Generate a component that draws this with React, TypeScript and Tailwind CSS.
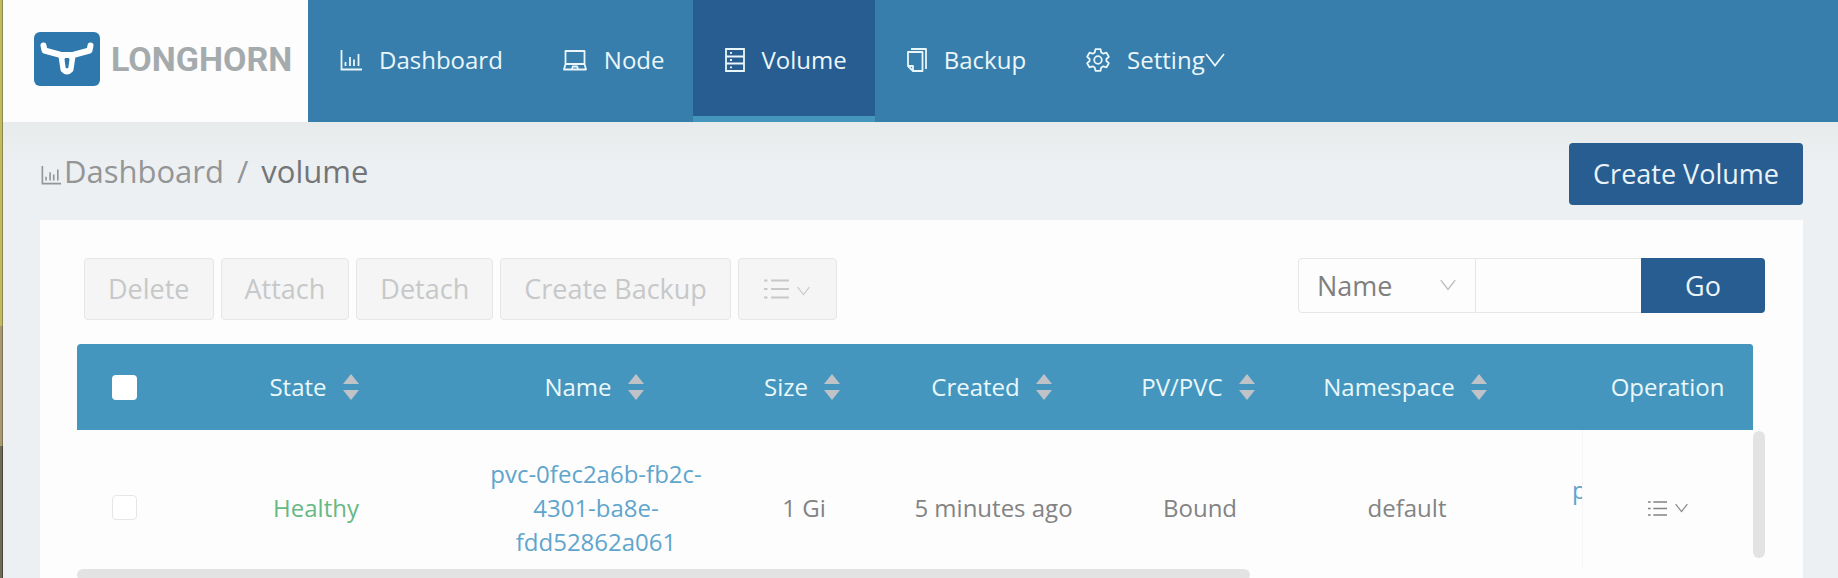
import React from "react";

type IconProps = { className?: string };

const ChartIcon = ({ className }: IconProps) => (
  <svg className={className} viewBox="0 0 22 22" fill="none" stroke="currentColor" strokeWidth="1.8" aria-hidden="true">
    <path d="M1.5 1v19.500H22M5.500 13v4M10 8v9M14 10.500v6.500M18.500 5v12" />
  </svg>
);

const LaptopIcon = ({ className }: IconProps) => (
  <svg className={className} viewBox="0 0 24 22" fill="none" stroke="currentColor" strokeWidth="1.8" strokeLinejoin="round" aria-hidden="true">
    <path d="M2.500 15V2h19v13M2.500 15h19L23 20.500H1z" />
    <path d="M9 20l.8-2.500h4.400l.8 2.500" />
  </svg>
);

const ServerIcon = ({ className }: IconProps) => (
  <svg className={className} viewBox="0 0 20 24" fill="none" stroke="currentColor" strokeWidth="1.8" aria-hidden="true">
    <path d="M1 1h18v22H1zM1 8.500h18M1 15.500h18M5 4.800h2M5 12h2M5 19.300h2" />
  </svg>
);

const CopyIcon = ({ className }: IconProps) => (
  <svg className={className} viewBox="0 0 20 24" fill="none" stroke="currentColor" strokeWidth="1.8" strokeLinejoin="round" aria-hidden="true">
    <path d="M4 1h15v20M1 4h14.500v19H6l-5-5z" />
    <path d="M1 18h5v5" />
  </svg>
);

const GearIcon = ({ className }: IconProps) => (
  <svg className={className} viewBox="0 0 24 24" fill="none" stroke="currentColor" strokeWidth="1.8" strokeLinejoin="round" aria-hidden="true">
    <path d="M9.500 1.200h5l.8 3.300 2 1.200 3.200-1 2.300 4.100-2.400 2.200v2l2.400 2.200-2.300 4.100-3.200-1-2 1.200-.8 3.300h-5l-.8-3.300-2-1.200-3.200 1-2.300-4.100L3.600 13v-2L1.200 8.800l2.300-4.100 3.200 1 2-1.200z" />
    <circle cx="12" cy="12" r="3.800" />
  </svg>
);

const ChevronIcon = ({ className }: IconProps) => (
  <svg className={className} viewBox="0 0 20 14" fill="none" stroke="currentColor" strokeWidth="1.700" aria-hidden="true">
    <path d="M1 1l9 11.500L19 1" />
  </svg>
);

const ListIcon = ({ className }: IconProps) => (
  <svg className={className} viewBox="0 0 25 22" fill="none" stroke="currentColor" strokeWidth="2" aria-hidden="true">
    <path d="M0 2.500h3.500M7 2.500h18M0 11h3.500M7 11h18M0 19.500h3.500M7 19.500h18" />
  </svg>
);

const LonghornMark = ({ className }: IconProps) => (
  <svg className={className} viewBox="0 0 66 54" aria-hidden="true">
    <rect width="66" height="54" rx="6" fill="#2f78ae" />
    <g fill="none" stroke="#fff" strokeLinecap="round" strokeLinejoin="round">
      <path d="M9.500 13.500l1 5L27 23h12l16.500-4.500 1-5" strokeWidth="6" />
      <path d="M27.500 24l2 13.500q3.500 4 7 0L38.500 24" strokeWidth="6" />
    </g>
    <path d="M30.500 27h5l-1.200 9h-2.600z" fill="#2f78ae" />
  </svg>
);

const Sorter = () => (
  <svg className="h-[26px] w-4 shrink-0" viewBox="0 0 16 26" fill="#bfc3c8" aria-hidden="true">
    <path d="M8 0l8 10H0zM0 16h16l-8 10z" />
  </svg>
);

const navItems = [
  { label: "Dashboard", Icon: ChartIcon, size: "w-[22px] h-[22px]" },
  { label: "Node", Icon: LaptopIcon, size: "w-6 h-[22px]" },
  { label: "Volume", Icon: ServerIcon, size: "w-5 h-6", active: true },
  { label: "Backup", Icon: CopyIcon, size: "w-5 h-6" },
  { label: "Setting", Icon: GearIcon, size: "w-6 h-6", menu: true },
];

const columns = ["State", "Name", "Size", "Created", "PV/PVC", "Namespace"];
const bulkActions = ["Delete", "Attach", "Detach", "Create Backup"];

const disabledButton =
  "flex h-[62px] min-w-[99px] items-center justify-center rounded border border-[#e6e6e6] bg-[#f5f5f5] px-[23px] text-[27px] text-[#c6c8ca]";

export default function App() {
  return (
    <div className="flex h-screen overflow-hidden bg-[#ecf0f3] font-['Open_Sans',sans-serif] text-[#838383]">
      <div className="flex w-[3px] shrink-0 flex-col">
        <div className="h-[326px] border-r border-[#8b874f] bg-[#c0bb5c]" />
        <div className="h-[120px] border-r border-[#7c7353] bg-[#a59a72]" />
        <div className="flex-1 border-r border-[#48463c] bg-[#6f6b59]" />
      </div>

      <div className="flex min-w-0 flex-1 flex-col">
        <header className="flex h-[122px] shrink-0 bg-[#377eac]">
          <a href="#home" className="flex w-[305px] shrink-0 items-center gap-[11px] bg-[#fdfdfd] pb-1 pl-[31px]">
            <LonghornMark className="h-[54px] w-[66px] shrink-0" />
            <span className="font-['Roboto',sans-serif] text-[34px] font-bold text-[#a5abad]">LONGHORN</span>
          </a>
          <nav className="flex text-[24px] text-[#eaf6fa]">
            {navItems.map(({ label, Icon, size, active, menu }) => (
              <a
                key={label}
                href={`#${label.toLowerCase()}`}
                className={`flex items-center border-b-[6px] pt-1 pr-7 pl-8 ${
                  active ? "border-[#4496bd] bg-[#285d91]" : "border-transparent"
                }`}
              >
                <Icon className={`mr-[17px] shrink-0 ${size}`} />
                {label}
                {menu && <ChevronIcon className="h-[14px] w-5" />}
              </a>
            ))}
          </nav>
        </header>

        <main className="flex min-h-0 flex-1 flex-col bg-linear-to-b from-[#e8ebeb] to-[#ecf0f3] to-10% pr-[35px] pl-[37px]">
          <div className="flex h-[98px] shrink-0 items-center justify-between">
            <div className="flex items-center text-[31px]">
              <a href="#dashboard" className="flex items-center text-[#949596]">
                <ChartIcon className="mt-2 mr-0.5 h-5 w-[22px]" />
                Dashboard
              </a>
              <span className="mx-[13px] text-[#949596]">/</span>
              <span className="text-[#737577]">volume</span>
            </div>
            <button type="button" className="mb-[-6px] h-[62px] rounded bg-[#285d91] px-6 text-[27px] text-[#eaf4f8]">
              Create Volume
            </button>
          </div>

          <section className="flex-1 bg-[#fdfdfe] pt-[38px] pr-[38px] pl-[37px]">
            <div className="flex items-start justify-between pb-6">
              <div className="flex gap-[7px] pl-[7px]">
                {bulkActions.map((action) => (
                  <button key={action} type="button" disabled className={disabledButton}>
                    {action}
                  </button>
                ))}
                <button type="button" disabled aria-label="More actions" className={`${disabledButton} gap-2`}>
                  <ListIcon className="h-[22px] w-[25px]" />
                  <ChevronIcon className="mt-1 h-[10px] w-[13px]" />
                </button>
              </div>
              <form className="flex h-[55px] text-[27px]">
                <div className="relative w-[178px]">
                  <select
                    aria-label="Search field"
                    className="h-full w-full appearance-none rounded-l border border-[#e6e6e6] bg-[#fdfdfe] pt-0.5 pl-[18px] text-[#808080]"
                  >
                    <option>Name</option>
                  </select>
                  <ChevronIcon className="pointer-events-none absolute top-[21px] right-5 h-3 w-4 text-[#bcbcbc]" />
                </div>
                <input aria-label="Search text" className="w-[165px] border-y border-[#e6e6e6] bg-[#fdfdfe] px-3" />
                <button type="submit" className="w-[124px] rounded-r bg-[#285d91] pt-0.5 text-[#eaf4f8]">
                  Go
                </button>
              </form>
            </div>

            <div className="flex">
              <div className="min-w-0 flex-1 overflow-hidden rounded-t">
                <table className="w-[calc(100%+12px)] table-fixed border-separate border-spacing-0 text-center text-[24px] leading-[34px]">
                  <colgroup>
                    <col className="w-[94px]" />
                    <col className="w-[290px]" />
                    <col />
                    <col className="w-[146px]" />
                    <col className="w-[233px]" />
                    <col className="w-[180px]" />
                    <col className="w-[234px]" />
                    <col className="w-[70px]" />
                    <col className="w-[171px]" />
                  </colgroup>
                  <thead>
                    <tr className="h-[86px] bg-[#4596be] text-[#eaf8fb]">
                      <th scope="col">
                        <input
                          type="checkbox"
                          aria-label="Select all volumes"
                          className="mx-auto block size-[25px] appearance-none rounded-sm bg-white"
                        />
                      </th>
                      {columns.map((column) => (
                        <th key={column} scope="col" className="pr-1 font-normal">
                          <div className="flex items-center justify-center gap-4">
                            {column}
                            <Sorter />
                          </div>
                        </th>
                      ))}
                      <th />
                      <th scope="col" className="sticky right-0 bg-[#4596be] font-normal">
                        Operation
                      </th>
                    </tr>
                  </thead>
                  <tbody>
                    <tr className="h-[139px] align-middle">
                      <td className="pt-4">
                        <input
                          type="checkbox"
                          aria-label="Select volume"
                          className="mx-auto block size-[25px] appearance-none rounded-sm border border-[#e4e6e8] bg-white"
                        />
                      </td>
                      <td className="pt-4 text-[#68b884]">Healthy</td>
                      <td className="pt-4">
                        <a href="#volume" className="block text-[#5fa5cc]">
                          pvc-0fec2a6b-fb2c-
                          <br />
                          4301-ba8e-
                          <br />
                          fdd52862a061
                        </a>
                      </td>
                      <td className="pt-4">1 Gi</td>
                      <td className="pt-4">5 minutes ago</td>
                      <td className="pt-4">Bound</td>
                      <td className="pt-4">default</td>
                      <td className="pb-5 pl-12 text-left text-[#5fa5cc]">p</td>
                      <td className="sticky right-0 border-l border-[#f6f6f6] bg-[#fdfdfe] pt-4">
                        <button type="button" aria-label="Volume operations" className="inline-flex items-center gap-2">
                          <ListIcon className="h-[17px] w-[19px]" />
                          <ChevronIcon className="h-[10px] w-[13px]" />
                        </button>
                      </td>
                    </tr>
                  </tbody>
                </table>
                <div className="h-3 w-[70%] rounded-full bg-[#e3e3e3]" />
              </div>
              <div className="w-3 shrink-0 pt-[87px]">
                <div className="h-[127px] rounded-full bg-[#e3e3e3]" />
              </div>
            </div>
          </section>
        </main>
      </div>
    </div>
  );
}
